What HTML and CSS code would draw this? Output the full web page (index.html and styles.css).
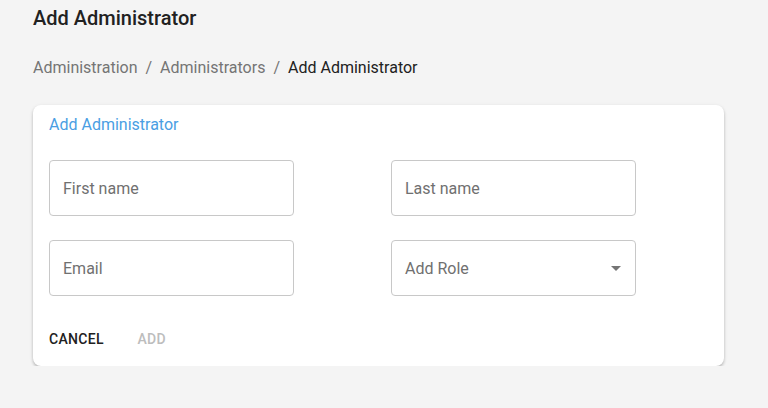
FILE: index.html
```html
<!DOCTYPE html>
<html>
<head>
<meta charset="utf-8">
<link rel="stylesheet" href="styles.css">
</head>
<body>
<div class="page">
  <h1 class="page-title">Add Administrator</h1>
  <nav class="crumbs">
    <span class="crumb">Administration</span>
    <span class="sep">/</span>
    <span class="crumb">Administrators</span>
    <span class="sep">/</span>
    <span class="crumb current">Add Administrator</span>
  </nav>
  <div class="card">
    <div class="card-content">
      <div class="card-title">Add Administrator</div>
      <div class="form-grid">
        <div class="field"><span class="placeholder">First name</span></div>
        <div class="field"><span class="placeholder">Last name</span></div>
        <div class="field"><span class="placeholder">Email</span></div>
        <div class="field select"><span class="placeholder">Add Role</span>
          <svg class="arrow" viewBox="0 0 24 24" width="24" height="24"><path d="M7 10l5 5 5-5z" fill="#757575"/></svg>
        </div>
      </div>
    </div>
    <div class="card-actions">
      <button class="btn">Cancel</button>
      <button class="btn disabled">Add</button>
    </div>
  </div>
</div>
</body>
</html>
```
FILE: styles.css
```css
html, body {
  margin: 0;
  padding: 0;
  background: #f4f4f4;
  font-family: Roboto, "Liberation Sans", sans-serif;
}
.page {
  padding: 7px 44px 0 33px;
}
.page-title {
  margin: 0;
  font-size: 20px;
  font-weight: 500;
  line-height: 23px;
  color: #212121;
}
.crumbs {
  margin-top: 28px;
  font-size: 16px;
  line-height: 20px;
  color: #757575;
  display: flex;
  gap: 8px;
}
.crumb.current {
  color: #212121;
}
.card {
  margin-top: 27px;
  width: 691px;
  background: #fff;
  border-radius: 8px;
  box-shadow: 0 2px 3px rgba(0,0,0,0.2), 0 1px 4px rgba(0,0,0,0.08);
}
.card-content {
  padding: 9px 16px 16px 16px;
}
.card-title {
  font-size: 16px;
  line-height: 22px;
  color: #4a9ee3;
}
.form-grid {
  margin-top: 24px;
  display: grid;
  grid-template-columns: 245px 245px;
  column-gap: 97px;
  row-gap: 24px;
}
.field {
  box-sizing: border-box;
  height: 56px;
  border: 1px solid #c8c8c8;
  border-radius: 4px;
  display: flex;
  align-items: center;
  padding: 0 13px;
  position: relative;
}
.placeholder {
  font-size: 16px;
  color: #707070;
}
.select {
  justify-content: space-between;
}
.arrow {
  margin-right: -6px;
}
.card-actions {
  display: flex;
  padding: 9px 8px 9px 8px;
  gap: 8px;
}
.btn {
  font-family: Roboto, "Liberation Sans", sans-serif;
  font-size: 14px;
  font-weight: 500;
  text-transform: uppercase;
  letter-spacing: 0.3px;
  height: 36px;
  min-width: 64px;
  padding: 6px 8px;
  border: 0;
  background: transparent;
  color: #212121;
  border-radius: 4px;
}
.btn.disabled {
  color: #bdbdbd;
}
```
